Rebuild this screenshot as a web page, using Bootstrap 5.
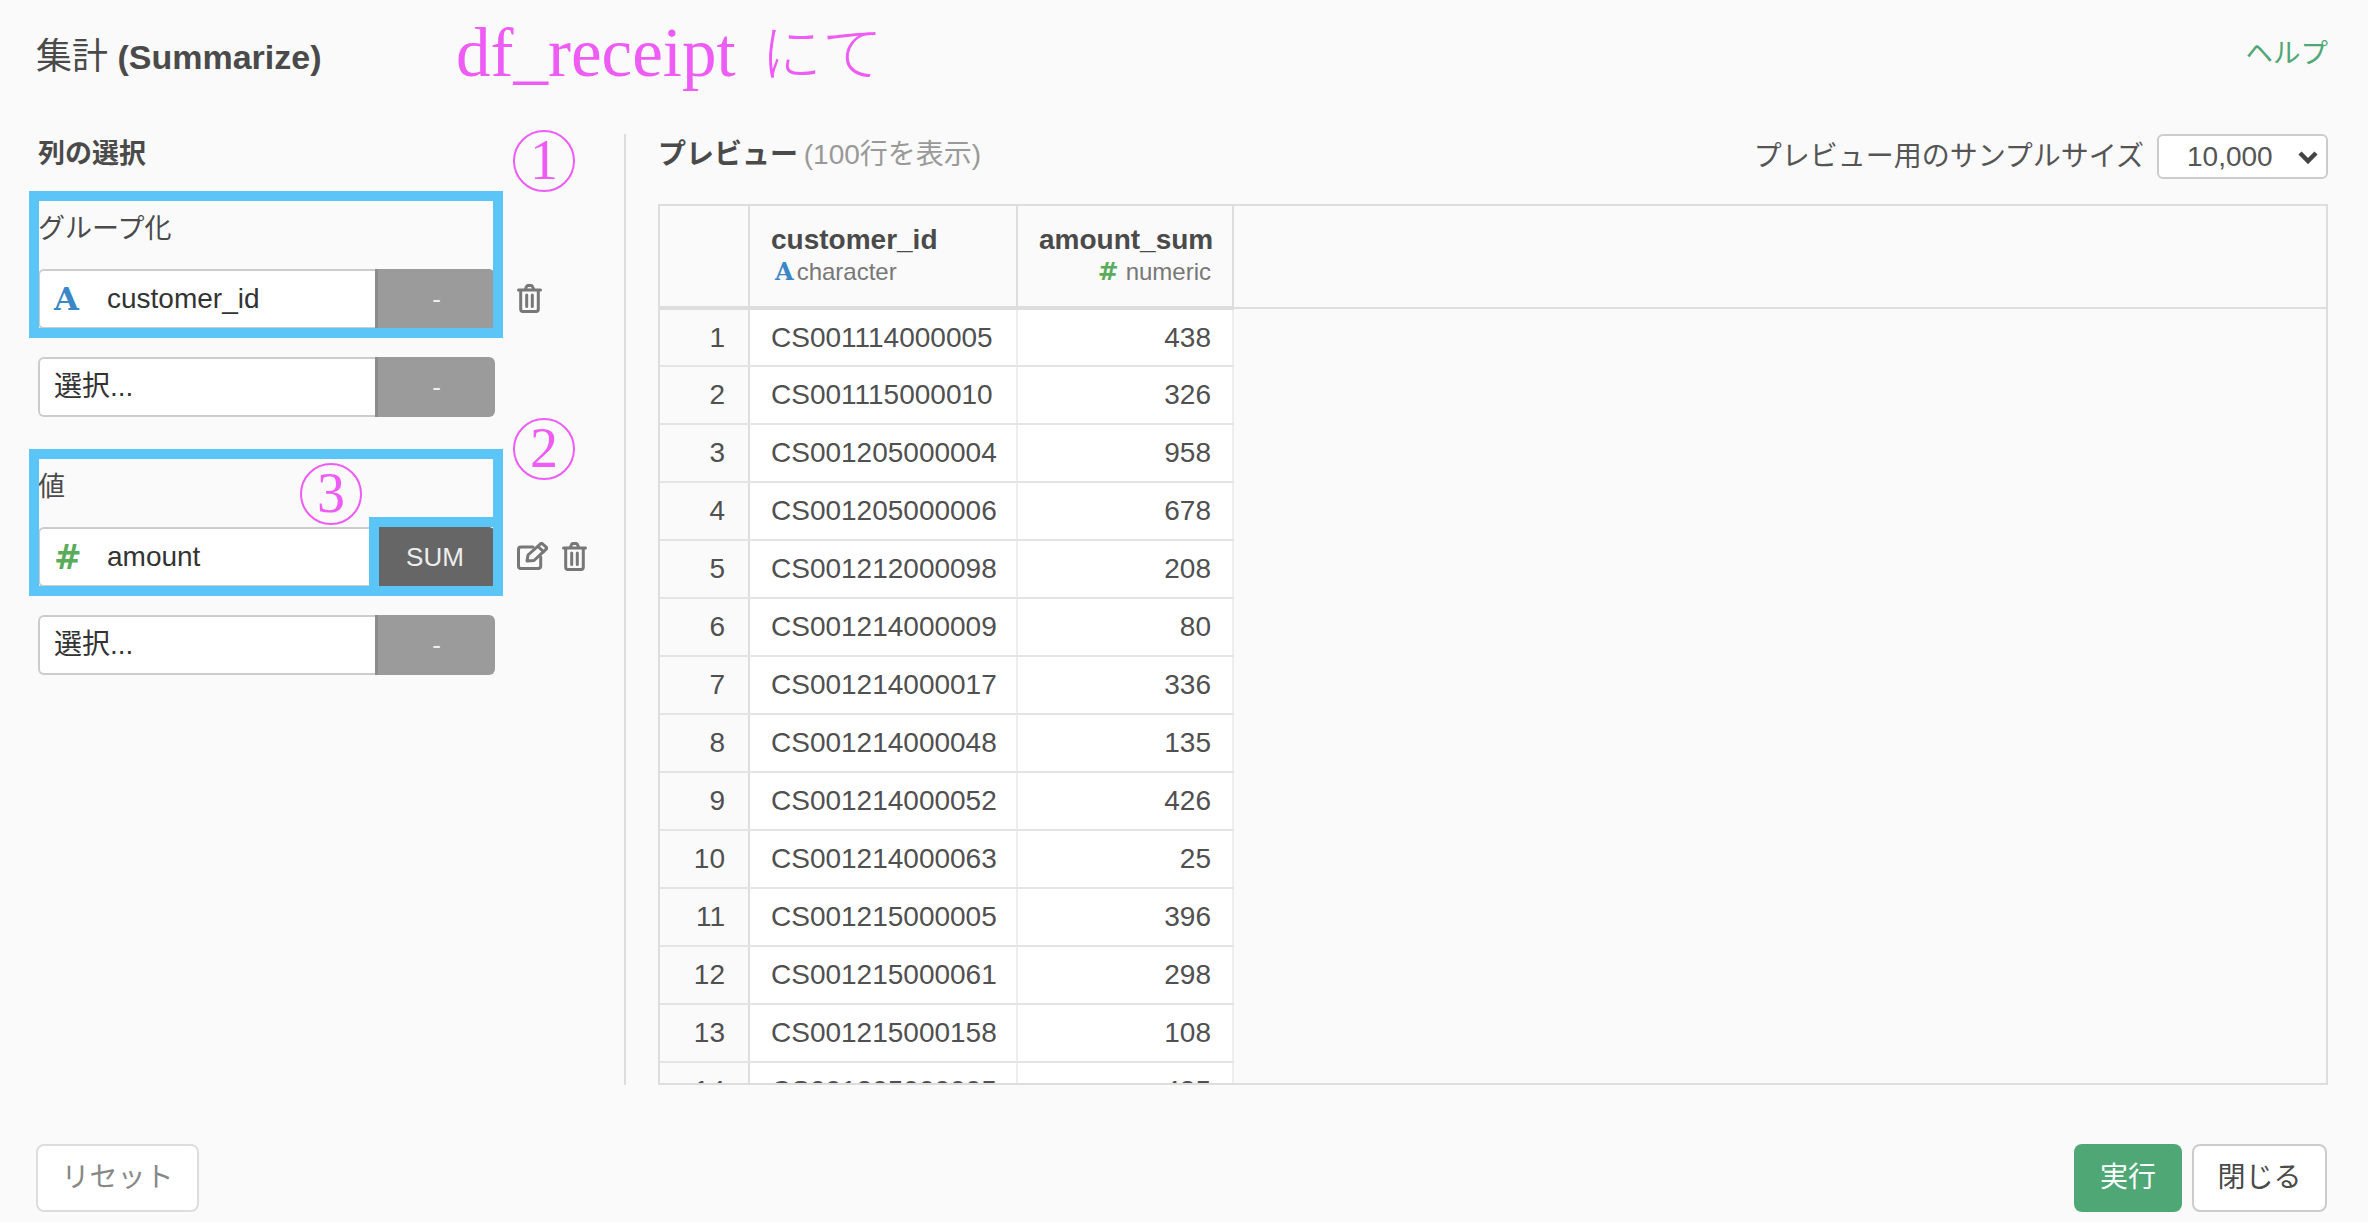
<!DOCTYPE html>
<html lang="ja">
<head>
<meta charset="utf-8">
<title>集計 (Summarize)</title>
<link href="https://cdn.jsdelivr.net/npm/bootstrap@5.3.0/dist/css/bootstrap.min.css" rel="stylesheet">
<style>
html,body{height:100%}
body{margin:0;background:#fafafa;color:#4a4a4a;font-family:"Liberation Sans","Noto Sans CJK JP",sans-serif;font-size:28px;overflow:hidden}
.page-wrap{height:1222px}
.top-bar{height:134px;padding:0 40px 20px 36px;position:relative}
.ttl{margin:0;font-size:34px;font-weight:700;line-height:40px;width:420px;color:#4a4a4a}
.ttl-cjk{font-weight:400;font-size:36px}
.note-text{color:#ee5cf5;font-family:"Liberation Serif","Noto Sans CJK JP",serif;font-size:69px;line-height:80px;margin-top:-12px}
.note-cjk{font-family:"Noto Sans CJK JP",sans-serif;font-weight:300;font-size:61px;margin-left:25px}
.help-link{color:#4fa776;font-size:27.5px;text-decoration:none;line-height:40px;margin-bottom:6px}
.main-area{height:951px}
.left-col{width:626px;border-right:2px solid #ddd;padding-left:38px;position:relative}
.sec-ttl{font-size:27px;font-weight:700;line-height:40px;height:40px;margin:0}
.grp{position:relative}
.grp-one{margin-top:35px}
.grp-two{margin-top:50px}
.grp-lbl{font-size:27px;line-height:40px;height:40px;margin-bottom:20px}
.pick-row{height:60px}
.pick-row+.pick-row{margin-top:28px}
.pick-grp{width:458px;height:60px;flex-wrap:nowrap}
.pick-field{display:flex;align-items:center;width:338px;flex:none;background:#fff;border:2px solid #ccc;border-right:0;border-radius:6px 0 0 6px;font-size:28px;color:#333;padding:0 0 0 14px;line-height:1}
.pick-btn{width:120px;flex:none;background:#9b9b9b;border:0;border-left:3px solid #8c8c8c;border-radius:0 6px 6px 0;color:#eee;font-size:26px;padding:0}
.pick-btn-on{background:#666;border-left:0}
.ico-a{width:53px;font-family:"DejaVu Serif",serif;font-weight:700;font-size:32px;color:#3a87c8}
.ico-h{width:53px;font-family:"DejaVu Sans",sans-serif;font-weight:700;font-size:33px;color:#5aab5a}
.act-ico{color:#777;display:block}
.act-wrap{margin:-2px 0 0 21px;gap:14px}
.blue-frame{position:absolute;z-index:5;border:10px solid #5bc5f8;pointer-events:none}
.frm-main{left:-9px;top:-18px;width:474px;height:147px}
.frm-sum{left:331px;top:50px;width:134px;height:79px}
.circ{position:absolute;z-index:6;width:62px;height:62px;border:2px solid #ee5cf5;border-radius:50%;color:#ee5cf5;font-family:"Liberation Serif",serif;font-size:56px;line-height:56px;text-align:center;pointer-events:none}
.c-one{left:513px;top:-4px}
.c-two{left:513px;top:284px}
.c-three{left:300px;top:329px}
.right-col{padding:0 40px 0 32px;min-width:0}
.prev-head{height:70px;padding-bottom:25px}
.prev-ttl{font-size:28px;font-weight:700;margin:0 0 3px;line-height:40px}
.prev-cnt{font-weight:400;color:#999;font-size:28px;margin-left:-2px}
.smp-lbl{font-size:28px;color:#555;margin-right:13px}
.smp-sel{width:171px;height:45px;border:2px solid #ccc;border-radius:6px;font-size:28px;color:#555;padding:0 0 0 28px;background-color:#fff;background-size:20px 14px;background-position:right 8px center;background-image:url("data:image/svg+xml,%3csvg xmlns='http://www.w3.org/2000/svg' viewBox='0 0 20 14'%3e%3cpath fill='none' stroke='%23444' stroke-width='4.5' d='M2 3l8 8 8-8'/%3e%3c/svg%3e")}
.tbl-box{height:881px;border:2px solid #ddd;overflow:hidden;background:#fafafa}
.prev-tbl{table-layout:fixed;width:100%;margin:0;background:transparent;--bs-table-bg:transparent;color:#4a4a4a}
.prev-tbl>thead>tr>th{height:102px;background:#fafafa;border:0;border-bottom:4px solid #ddd;border-right:2px solid #ddd;padding:0 21px 3px;font-size:28px;font-weight:700;line-height:34px;vertical-align:middle;box-shadow:none;color:#4a4a4a}
.prev-tbl>thead>tr>th.col-fill{border-right:0;border-bottom-width:2px;padding:0}
.col-idx{width:89px}
.col-id{width:268px}
.col-amt{width:216px}
.th-type{display:block;font-weight:400;font-size:24px;line-height:28px;color:#777;margin-top:1px}
.th-a{font-family:"DejaVu Serif",serif;font-weight:700;font-size:24px;color:#3a87c8;margin:0 3px 0 4px;line-height:1}
.th-h{font-family:"DejaVu Sans",sans-serif;font-weight:700;font-size:25px;color:#5aab5a;margin-right:7px;line-height:1}
.prev-tbl>tbody>tr>td{height:58px;background:#fff;border:0;border-bottom:2px solid #e4e4e4;border-right:2px solid #eee;padding:0 21px;font-size:28px;line-height:32px;vertical-align:middle;box-shadow:none;color:#505050}
.prev-tbl>tbody>tr>td.idx-cell{background:#fafafa;border-right-color:#ddd;padding:0 23px 0 0;text-align:right}
.prev-tbl>tbody>tr>td.fill-cell{background:#fafafa;border:0}
.foot-bar{height:137px;padding:59px 41px 10px 36px}
.foot-btn{height:68px;font-size:28px;border-radius:8px;padding:0;line-height:1}
.btn-reset{width:163px;background:#fff;border:2px solid #ddd;color:#888}
.btn-run{width:108px;background:#4fa776;border:0;color:#fff}
.btn-close-it{width:135px;background:#fff;border:2px solid #ccc;color:#4a4a4a;margin-left:10px}
</style>
</head>
<body>
<div class="page-wrap d-flex flex-column">
  <header class="top-bar d-flex align-items-center">
    <h1 class="ttl"><span class="ttl-cjk">集計</span> (Summarize)</h1>
    <div class="note-text">df_receipt<span class="note-cjk">にて</span></div>
    <a href="#" class="help-link ms-auto">ヘルプ</a>
  </header>
  <main class="main-area d-flex">
    <section class="left-col flex-shrink-0">
      <h2 class="sec-ttl">列の選択</h2>
      <div class="grp grp-one">
        <div class="grp-lbl">グループ化</div>
        <div class="pick-row d-flex align-items-center">
          <div class="input-group pick-grp">
            <div class="pick-field"><span class="ico-a">A</span>customer_id</div>
            <button class="btn pick-btn" type="button">-</button>
          </div>
          <div class="act-wrap d-flex">
            <svg class="act-ico" width="25" height="29" viewBox="0 0 25 29" fill="none" stroke="currentColor" stroke-width="3" stroke-linecap="round" stroke-linejoin="round"><path d="M1.500 6h22M8 6l1.500-3.400q.4-1 1.500-1h3q1.100 0 1.500 1L17 6M3.700 6v19.300q0 2.200 2.200 2.200h13.200q2.200 0 2.200-2.200V6M9.700 11v11.500M15.300 11v11.500"/></svg>
          </div>
        </div>
        <div class="pick-row d-flex align-items-center">
          <div class="input-group pick-grp">
            <div class="pick-field">選択...</div>
            <button class="btn pick-btn" type="button">-</button>
          </div>
        </div>
        <div class="blue-frame frm-main"></div>
      </div>
      <div class="grp grp-two">
        <div class="grp-lbl">値</div>
        <div class="pick-row d-flex align-items-center">
          <div class="input-group pick-grp">
            <div class="pick-field"><span class="ico-h">#</span>amount</div>
            <button class="btn pick-btn pick-btn-on" type="button">SUM</button>
          </div>
          <div class="act-wrap d-flex">
            <svg class="act-ico" width="31" height="28" viewBox="0 0 31 28" fill="none" stroke="currentColor" stroke-width="3" stroke-linecap="round" stroke-linejoin="round"><path d="M16 5H4Q1.500 5 1.500 7.700v16.300Q1.500 26.500 4 26.500h17q2.700 0 2.700-2.500V15"/><path d="M10 19l1-6L23.500 1.800q1-.9 2 0l3.700 3.400q1 1 0 2L17 18.500z"/><path d="M21 4.500l5.500 5.200"/></svg>
            <svg class="act-ico" width="25" height="29" viewBox="0 0 25 29" fill="none" stroke="currentColor" stroke-width="3" stroke-linecap="round" stroke-linejoin="round"><path d="M1.500 6h22M8 6l1.500-3.400q.4-1 1.500-1h3q1.100 0 1.500 1L17 6M3.700 6v19.300q0 2.200 2.200 2.200h13.200q2.200 0 2.200-2.200V6M9.700 11v11.500M15.300 11v11.500"/></svg>
          </div>
        </div>
        <div class="pick-row d-flex align-items-center">
          <div class="input-group pick-grp">
            <div class="pick-field">選択...</div>
            <button class="btn pick-btn" type="button">-</button>
          </div>
        </div>
        <div class="blue-frame frm-main"></div>
        <div class="blue-frame frm-sum"></div>
      </div>
      <div class="circ c-one">1</div>
      <div class="circ c-two">2</div>
      <div class="circ c-three">3</div>
    </section>
    <section class="right-col flex-grow-1">
      <div class="prev-head d-flex align-items-center justify-content-between">
        <h2 class="prev-ttl">プレビュー <span class="prev-cnt">(100行を表示)</span></h2>
        <div class="d-flex align-items-center">
          <span class="smp-lbl">プレビュー用のサンプルサイズ</span>
          <select class="form-select smp-sel"><option>10,000</option></select>
        </div>
      </div>
      <div class="tbl-box">
        <table class="table prev-tbl">
          <thead>
            <tr>
              <th class="col-idx"></th>
              <th class="col-id">customer_id<span class="th-type"><span class="th-a">A</span>character</span></th>
              <th class="col-amt text-end">amount_sum<span class="th-type"><span class="th-h">#</span>numeric</span></th>
              <th class="col-fill"></th>
            </tr>
          </thead>
          <tbody>
            <tr><td class="idx-cell">1</td><td>CS001114000005</td><td class="text-end">438</td><td class="fill-cell"></td></tr>
            <tr><td class="idx-cell">2</td><td>CS001115000010</td><td class="text-end">326</td><td class="fill-cell"></td></tr>
            <tr><td class="idx-cell">3</td><td>CS001205000004</td><td class="text-end">958</td><td class="fill-cell"></td></tr>
            <tr><td class="idx-cell">4</td><td>CS001205000006</td><td class="text-end">678</td><td class="fill-cell"></td></tr>
            <tr><td class="idx-cell">5</td><td>CS001212000098</td><td class="text-end">208</td><td class="fill-cell"></td></tr>
            <tr><td class="idx-cell">6</td><td>CS001214000009</td><td class="text-end">80</td><td class="fill-cell"></td></tr>
            <tr><td class="idx-cell">7</td><td>CS001214000017</td><td class="text-end">336</td><td class="fill-cell"></td></tr>
            <tr><td class="idx-cell">8</td><td>CS001214000048</td><td class="text-end">135</td><td class="fill-cell"></td></tr>
            <tr><td class="idx-cell">9</td><td>CS001214000052</td><td class="text-end">426</td><td class="fill-cell"></td></tr>
            <tr><td class="idx-cell">10</td><td>CS001214000063</td><td class="text-end">25</td><td class="fill-cell"></td></tr>
            <tr><td class="idx-cell">11</td><td>CS001215000005</td><td class="text-end">396</td><td class="fill-cell"></td></tr>
            <tr><td class="idx-cell">12</td><td>CS001215000061</td><td class="text-end">298</td><td class="fill-cell"></td></tr>
            <tr><td class="idx-cell">13</td><td>CS001215000158</td><td class="text-end">108</td><td class="fill-cell"></td></tr>
            <tr><td class="idx-cell">14</td><td>CS001205000005</td><td class="text-end">435</td><td class="fill-cell"></td></tr>
          </tbody>
        </table>
      </div>
    </section>
  </main>
  <footer class="foot-bar d-flex align-items-start">
    <button class="btn foot-btn btn-reset" type="button">リセット</button>
    <button class="btn foot-btn btn-run ms-auto" type="button">実行</button>
    <button class="btn foot-btn btn-close-it" type="button">閉じる</button>
  </footer>
</div>
<script src="https://cdn.jsdelivr.net/npm/bootstrap@5.3.0/dist/js/bootstrap.bundle.min.js"></script>
</body>
</html>
